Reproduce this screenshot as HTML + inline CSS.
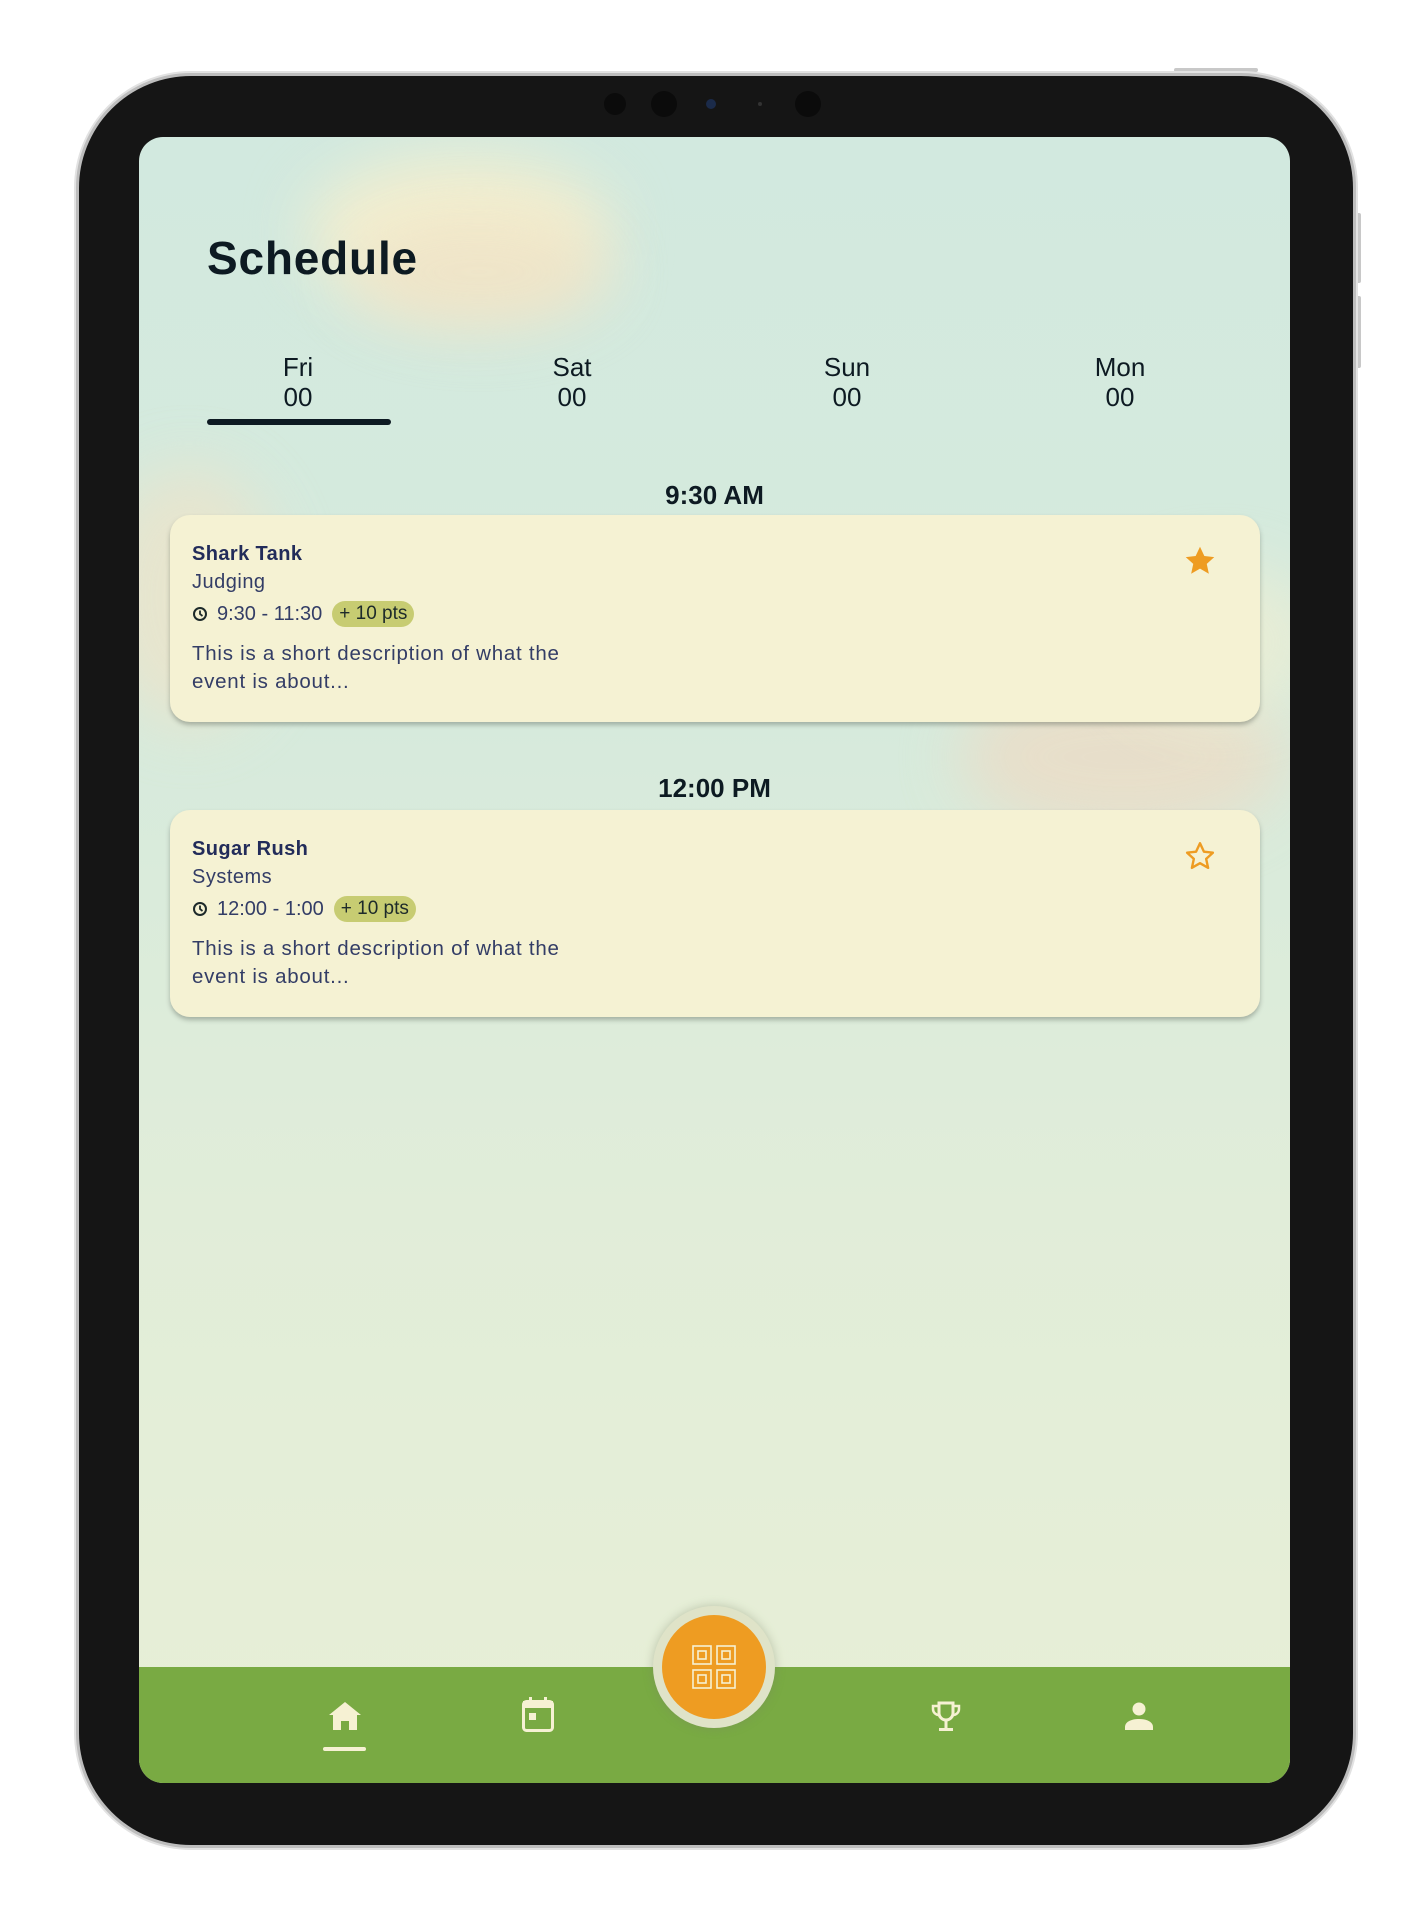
<!DOCTYPE html>
<html><head><meta charset="utf-8"><style>
*{margin:0;padding:0;box-sizing:border-box}
body{width:1425px;height:1920px;background:#fff;position:relative;overflow:hidden;font-family:"Liberation Sans",sans-serif}
.dev{position:absolute;left:76px;top:73px;width:1280px;height:1775px;border-radius:115px;background:#151515;border:3px solid #bdbdbd;box-shadow:0 0 0 2px #e2e2e2}
.btn{position:absolute;background:#c8c8c8;border-radius:2px}
.cam{position:absolute;border-radius:50%;background:#0b0b0b}
.scr{position:absolute;left:139px;top:137px;width:1151px;height:1646px;border-radius:24px;overflow:hidden;background:linear-gradient(180deg,#d2e9df 0%,#d6eadc 35%,#e1edd9 65%,#e8efd6 100%)}
.blob{position:absolute;border-radius:50%;filter:blur(30px)}
.abs{position:absolute}
.title{left:68px;top:94px;font-size:46px;font-weight:bold;color:#0d1a22;letter-spacing:0.8px}
.tab{position:absolute;top:215px;width:200px;text-align:center;font-size:26px;color:#0d1a22;line-height:30px;margin-left:-100px}
.time{position:absolute;width:100%;text-align:center;font-size:26px;font-weight:bold;color:#0d1a22}
.card{position:absolute;left:31px;width:1090px;height:207px;border-radius:20px;background:#f5f2d3;box-shadow:0 3px 5px rgba(60,70,60,.35)}
.card .t{position:absolute;left:22px;top:28px;font-size:20px;font-weight:bold;color:#222c5a;letter-spacing:0.4px}
.card .s{position:absolute;left:22px;top:56px;font-size:20px;color:#333d66;letter-spacing:0.5px}
.card .r{position:absolute;left:22px;top:86px;font-size:20px;color:#333d66;display:flex;align-items:center}
.pill{background:#c7cc72;border-radius:14px;padding:2px 7px;margin-left:10px;color:#1d2a2a;font-size:19px}
.card .d{position:absolute;left:22px;top:125px;font-size:20.5px;color:#333d66;line-height:28px;letter-spacing:0.75px}
.star{position:absolute;right:42px;top:28px}
.nav{position:absolute;left:0;top:1530px;width:1151px;height:116px;background:#79aa43}
</style></head><body>
<div class="btn" style="left:1174px;top:68px;width:84px;height:4px"></div>
<div class="btn" style="left:1356px;top:213px;width:5px;height:70px"></div>
<div class="btn" style="left:1356px;top:296px;width:5px;height:72px"></div>
<div class="dev">
</div>
<div class="cam" style="left:604px;top:93px;width:22px;height:22px"></div>
<div class="cam" style="left:651px;top:91px;width:26px;height:26px"></div>
<div class="cam" style="left:706px;top:99px;width:10px;height:10px;background:#1b2b4a"></div>
<div class="cam" style="left:758px;top:102px;width:4px;height:4px;background:#333"></div>
<div class="cam" style="left:795px;top:91px;width:26px;height:26px"></div>
<div class="scr">
 <div class="blob" style="left:170px;top:20px;width:300px;height:150px;background:#f3efd0"></div>
 <div class="blob" style="left:210px;top:80px;width:260px;height:110px;background:#efe2c6;opacity:.8"></div>
 <div class="blob" style="left:-40px;top:330px;width:180px;height:260px;background:#efe3c8;opacity:.7"></div>
 <div class="blob" style="left:820px;top:540px;width:330px;height:160px;background:#ecdcc6;opacity:.8"></div>
 <div class="blob" style="left:980px;top:430px;width:200px;height:150px;background:#eceed4;opacity:.8"></div>
 <div class="abs title">Schedule</div>
 <div class="tab" style="left:159px">Fri<br>00</div>
 <div class="tab" style="left:433px">Sat<br>00</div>
 <div class="tab" style="left:708px">Sun<br>00</div>
 <div class="tab" style="left:981px">Mon<br>00</div>
 <div class="abs" style="left:68px;top:282px;width:184px;height:6px;border-radius:3px;background:#0d1a22"></div>
 <div class="time" style="top:343px">9:30 AM</div>
 <div class="card" style="top:378px">
  <div class="t">Shark Tank</div><div class="s">Judging</div>
  <div class="r"><svg width="16" height="16" viewBox="0 0 16 16" style="margin-right:9px"><circle cx="8" cy="8" r="6" fill="none" stroke="#1d2a2a" stroke-width="2"/><path d="M8 4.5V8l2.5 2" fill="none" stroke="#1d2a2a" stroke-width="1.8"/></svg>9:30 - 11:30<span class="pill">+ 10 pts</span></div>
  <div class="d">This is a short description of what the<br>event is about...</div>
  <svg class="star" width="36" height="36" viewBox="0 0 24 24"><path d="M12 2.5l2.9 6.2 6.6.7-5 4.5 1.4 6.6L12 17.1l-5.9 3.4 1.4-6.6-5-4.5 6.6-.7z" fill="#ee9c22"/></svg>
 </div>
 <div class="time" style="top:636px">12:00 PM</div>
 <div class="card" style="top:673px">
  <div class="t">Sugar Rush</div><div class="s">Systems</div>
  <div class="r"><svg width="16" height="16" viewBox="0 0 16 16" style="margin-right:9px"><circle cx="8" cy="8" r="6" fill="none" stroke="#1d2a2a" stroke-width="2"/><path d="M8 4.5V8l2.5 2" fill="none" stroke="#1d2a2a" stroke-width="1.8"/></svg>12:00 - 1:00<span class="pill">+ 10 pts</span></div>
  <div class="d">This is a short description of what the<br>event is about...</div>
  <svg class="star" width="36" height="36" viewBox="0 0 24 24"><path d="M12 3.5l2.6 5.6 6 .7-4.5 4.1 1.3 6L12 16.8l-5.4 3.1 1.3-6-4.5-4.1 6-.7z" fill="none" stroke="#ee9c22" stroke-width="1.6" stroke-linejoin="round"/></svg>
 </div>
 <div class="nav">
  <svg class="abs" style="left:189px;top:34px" width="34" height="30" viewBox="0 0 34 30"><path d="M17 1L1 14h4v15h8v-9h8v9h8V14h4z" fill="#f6f1d3"/></svg>
  <div class="abs" style="left:184px;top:80px;width:43px;height:4px;border-radius:2px;background:#f6f1d3"></div>
  <svg class="abs" style="left:383px;top:30px" width="32" height="35" viewBox="0 0 32 35"><rect x="7" y="0" width="3" height="6" fill="#f6f1d3"/><rect x="22" y="0" width="3" height="6" fill="#f6f1d3"/><rect x="1.5" y="4.5" width="29" height="29" rx="3" fill="none" stroke="#f6f1d3" stroke-width="3"/><rect x="1" y="4" width="30" height="7" fill="#f6f1d3"/><rect x="7" y="16" width="7" height="7" fill="#f6f1d3"/></svg>
  <svg class="abs" style="left:791px;top:34px" width="32" height="31" viewBox="0 0 32 31"><path d="M9 2h14v10a7 7 0 0 1-14 0z" fill="none" stroke="#f6f1d3" stroke-width="3"/><path d="M9 5H3v3a6 6 0 0 0 6 6M23 5h6v3a6 6 0 0 1-6 6" fill="none" stroke="#f6f1d3" stroke-width="2.5"/><rect x="14.5" y="18" width="3" height="10" fill="#f6f1d3"/><rect x="9" y="27" width="14" height="3" fill="#f6f1d3"/></svg>
  <svg class="abs" style="left:986px;top:35px" width="28" height="28" viewBox="0 0 28 28"><circle cx="14" cy="7" r="6.5" fill="#f6f1d3"/><path d="M0 28v-3c0-5 6-8 14-8s14 3 14 8v3z" fill="#f6f1d3"/></svg>
 </div>
 <div class="abs" style="left:514px;top:1469px;width:122px;height:122px;border-radius:50%;background:#dfe3c8;box-shadow:0 0 10px rgba(120,130,100,.4)"></div>
 <div class="abs" style="left:523px;top:1478px;width:104px;height:104px;border-radius:50%;background:#ee9c22"></div>
 <svg class="abs" style="left:553px;top:1508px" width="44" height="44" viewBox="0 0 44 44" fill="none" stroke="#f6f1d3" stroke-width="1.6"><rect x="1" y="1" width="18" height="18"/><rect x="6" y="6" width="8" height="8"/><rect x="25" y="1" width="18" height="18"/><rect x="30" y="6" width="8" height="8"/><rect x="1" y="25" width="18" height="18"/><rect x="6" y="30" width="8" height="8"/><rect x="25" y="25" width="18" height="18"/><rect x="30" y="30" width="8" height="8"/></svg>
</div>
</body></html>
